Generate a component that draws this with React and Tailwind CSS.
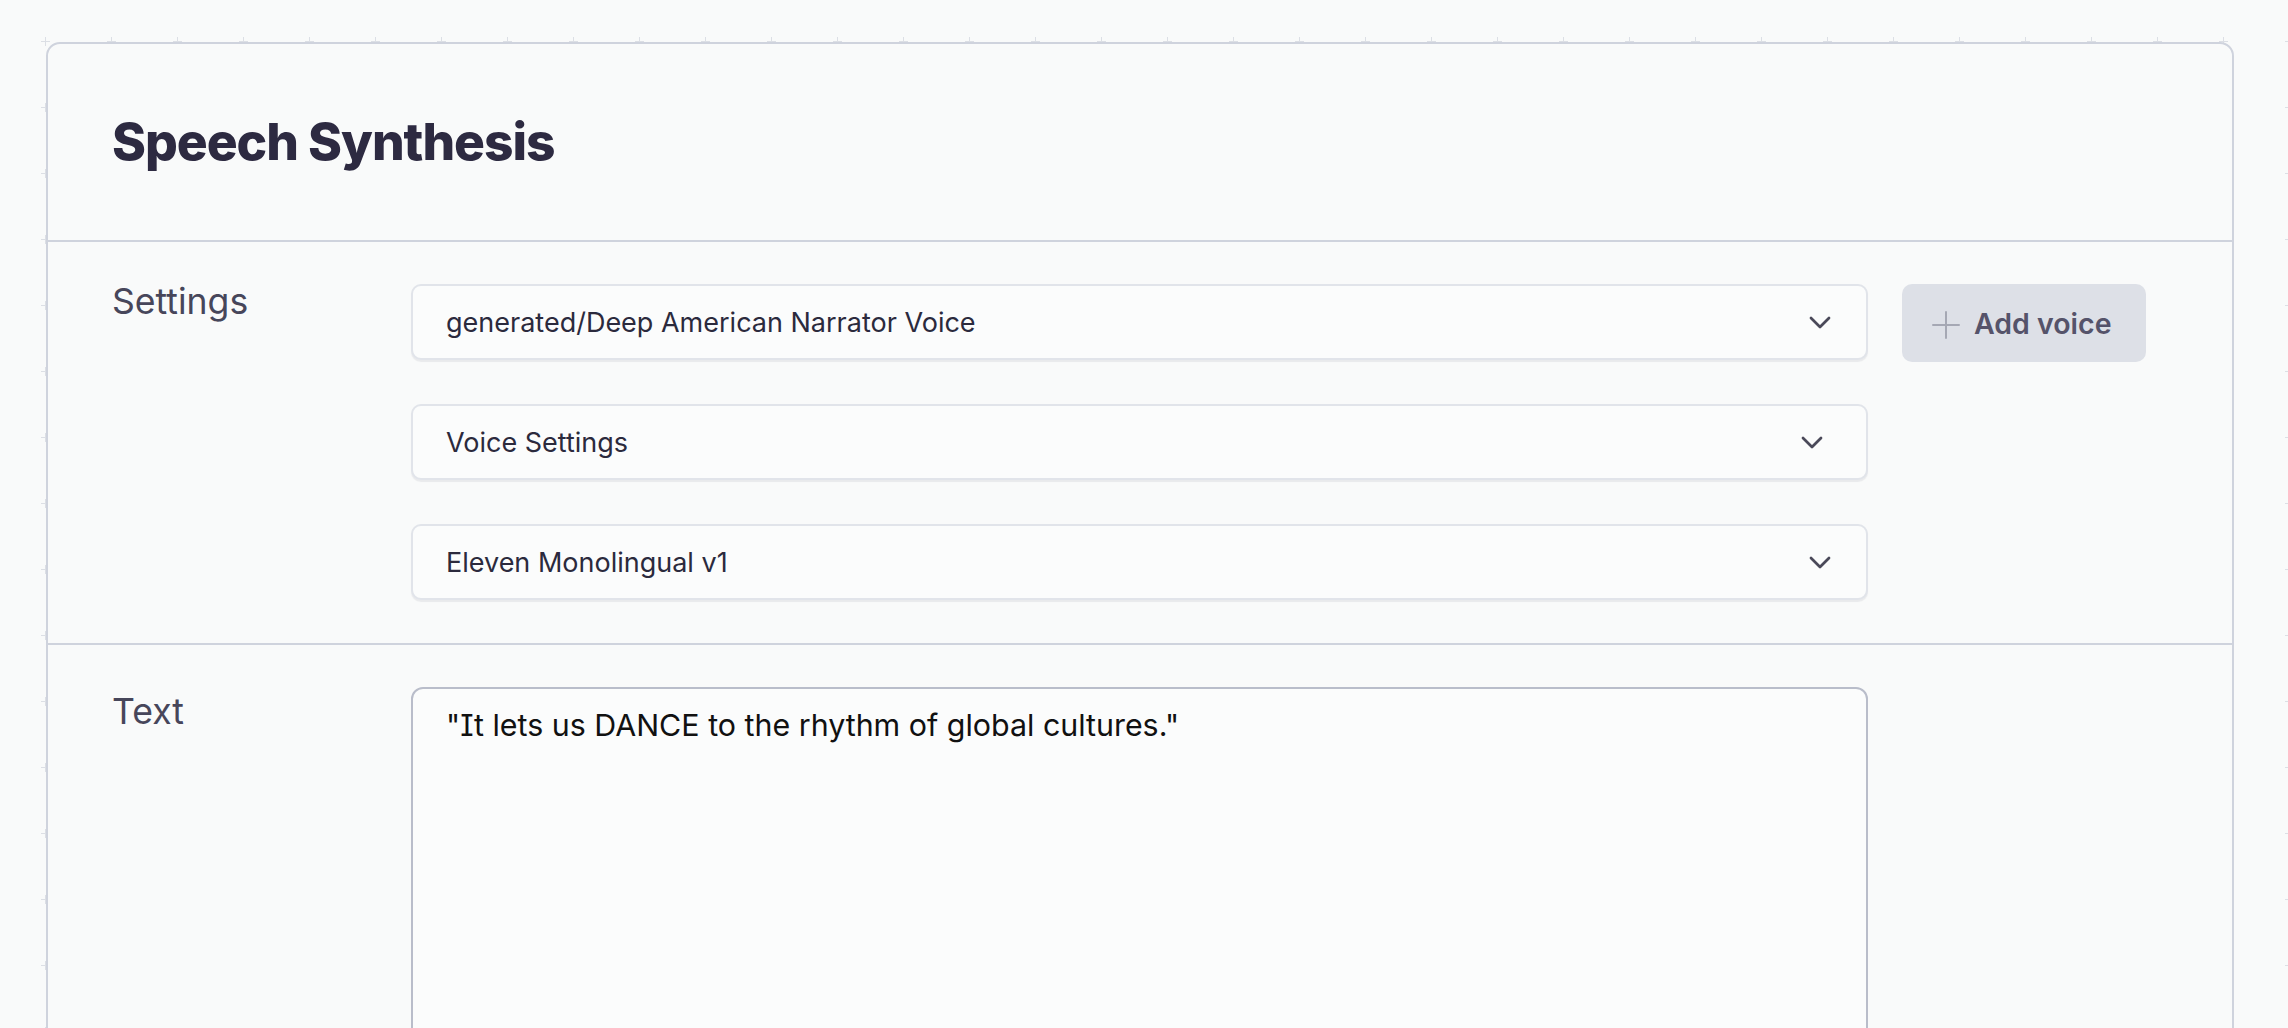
import { useState } from "react";

const Chevron = () => (
  <svg width="22" height="13" viewBox="0 0 22 13" fill="none">
    <path
      d="M2 2l9 9 9-9"
      stroke="#4a4959"
      strokeWidth="2.75"
      strokeLinecap="round"
      strokeLinejoin="round"
    />
  </svg>
);

const Plus = () => (
  <svg width="28" height="28" viewBox="0 0 28 28" fill="none">
    <path d="M14 1v26M1 14h26" stroke="#a5a8b4" strokeWidth="2" strokeLinecap="round" />
  </svg>
);

const Select = ({ value, inset = "pr-[35px]" }) => (
  <button
    className={
      "flex h-[76px] w-full items-center justify-between rounded-[10px] border-2 border-[#e1e4ea] bg-[#fbfcfc] pl-[33px] text-left shadow-[0_1.5px_1px_rgba(30,35,60,0.07)] " +
      inset
    }
  >
    <span className="text-[27px] leading-none text-[#2b2a3d]">{value}</span>
    <Chevron />
  </button>
);

const App = () => {
  const [text, setText] = useState('"It lets us DANCE to the rhythm of global cultures."');

  return (
    <div className="relative min-h-screen overflow-hidden bg-[#f9fafa] pt-[42px] font-['Inter','Noto_Sans',sans-serif]">
      {/* faint crosshair grid behind the card */}
      <svg className="pointer-events-none absolute inset-0 h-full w-full" aria-hidden="true">
        <defs>
          <pattern id="marks" x="12" y="8" width="66" height="66" patternUnits="userSpaceOnUse">
            <path d="M33.5 29v9M29 33.5h9" stroke="#dcdfe5" strokeWidth="1" />
          </pattern>
        </defs>
        <rect width="100%" height="100%" fill="url(#marks)" />
      </svg>

      <div className="relative ml-[46px] w-[2188px] rounded-[14px] border-2 border-[#cfd3dd] bg-[#f9fafa]">
        <div className="flex h-[198px] items-center border-b-2 border-[#cfd3dd] px-[64px]">
          <h1 className="text-[51.5px] font-extrabold leading-none tracking-[-0.02em] text-[#2d2a41]">
            Speech Synthesis
          </h1>
        </div>

        <div className="flex border-b-2 border-[#cfd3dd] px-[64px] pb-[43px] pt-[42px]">
          <div className="w-[299px] shrink-0 text-[35.6px] leading-none text-[#47465a]">
            Settings
          </div>
          <div className="flex w-[1457px] flex-col gap-[44px]">
            <Select value="generated/Deep American Narrator Voice" />
            <Select value="Voice Settings" inset="pr-[43px]" />
            <Select value="Eleven Monolingual v1" />
          </div>
          <div className="ml-[34px]">
            <button className="flex h-[78px] w-[244px] items-center gap-[14px] rounded-[10px] bg-[#dde0e7] pl-[30px] pt-[3px] text-[28.5px] font-semibold text-[#55536a]">
              <Plus />
              Add voice
            </button>
          </div>
        </div>

        <div className="flex px-[64px] pb-[44px] pt-[42px]">
          <div className="w-[299px] shrink-0 pt-[7px] text-[35.6px] leading-none text-[#47465a]">
            Text
          </div>
          <textarea
            value={text}
            onChange={(e) => setText(e.target.value)}
            className="h-[440px] w-[1457px] resize-none rounded-[12px] border-2 border-[#b9bdca] bg-[#fbfcfc] px-[33px] pt-[17px] text-[30.4px] leading-[1.3] text-[#111111] outline-none [font-feature-settings:'cv08'_1]"
          />
        </div>
      </div>
    </div>
  );
};

export default App;
